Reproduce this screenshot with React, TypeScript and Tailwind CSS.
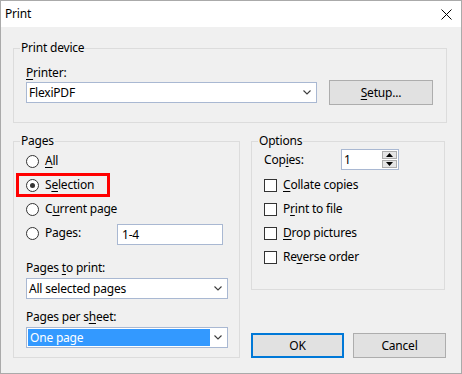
import React from "react";

const U = ({ children }: { children: React.ReactNode }) => (
  <span className="underline decoration-1 underline-offset-[2px]">{children}</span>
);

const Chevron = () => (
  <svg width="8" height="5" viewBox="0 0 8 5" className="block">
    <path d="M0.5 0.5 L4 4 L7.5 0.5" fill="none" stroke="#3c3c3c" strokeWidth="1.1" />
  </svg>
);

const Combo = ({
  width,
  text,
  highlighted,
}: {
  width: string;
  text: string;
  highlighted?: boolean;
}) => (
  <div className={`${width} h-[21px] border border-[#a9b8d2] bg-white flex items-stretch shrink-0`}>
    {highlighted ? (
      <div className="flex-1 my-[1px] ml-[1px] mr-[17px] bg-[#3399ff] text-white pl-[2px] flex items-center leading-none">
        {text}
      </div>
    ) : (
      <div className="flex-1 pl-[2px] flex items-center leading-none">{text}</div>
    )}
    {highlighted ? null : <div className="w-[17px]" />}
    <div className="w-0 flex items-center">
      <div className="-ml-[13px]">
        <Chevron />
      </div>
    </div>
  </div>
);

const Radio = ({ checked }: { checked?: boolean }) => (
  <div className="w-[13px] h-[13px] rounded-full border border-[#333333] bg-white flex items-center justify-center shrink-0">
    {checked ? <div className="w-[5px] h-[5px] rounded-full bg-[#333333]" /> : null}
  </div>
);

const Check = () => <div className="w-[13px] h-[13px] border border-[#333333] bg-white shrink-0" />;

const Button = ({
  children,
  width,
  primary,
}: {
  children: React.ReactNode;
  width: string;
  primary?: boolean;
}) => (
  <div
    className={`${width} h-[25px] bg-[#e1e1e1] flex items-center justify-center shrink-0 ${
      primary ? "border-2 border-[#0078d7]" : "border border-[#adadad]"
    }`}
  >
    {children}
  </div>
);

export default function App() {
  return (
    <div
      className="w-[462px] h-[374px] bg-[#f0f0f0] border border-[#aaaaaa] text-[12px] tracking-[-0.2px] text-black flex flex-col overflow-hidden"
      style={{ fontFamily: '"Noto Sans", "Open Sans", sans-serif' }}
    >
      {/* Title bar */}
      <div className="h-[26px] bg-white flex items-center justify-between pl-[4px] pr-[9px] shrink-0">
        <span className="leading-none">Print</span>
        <svg width="11" height="11" viewBox="0 0 11 11">
          <path d="M0.5 0.5 L10.5 10.5 M10.5 0.5 L0.5 10.5" stroke="#000" strokeWidth="1" />
        </svg>
      </div>

      {/* Print device */}
      <fieldset className="ml-[12px] mt-[13px] w-[434px] border border-[#dcdcdc]">
        <legend className="ml-[6px] px-[1px] leading-[16px]">Print device</legend>
        <div className="pl-[12px] pt-[9px] pb-[17px]">
          <div className="leading-[15px]">
            <U>P</U>rinter:
          </div>
          <div className="flex items-center gap-[12px] h-[25px]">
            <Combo width="w-[291px]" text="FlexiPDF" />
            <Button width="w-[104px]">
              <span>
                <U>S</U>etup...
              </span>
            </Button>
          </div>
        </div>
      </fieldset>

      <div className="flex ml-[12px] mt-[10px] gap-[11px]">
        {/* Pages */}
        <fieldset className="w-[227px] border border-[#dcdcdc]">
          <legend className="ml-[6px] px-[1px] leading-[16px]">Pages</legend>
          <div className="pl-[12px] pr-[11px] pb-[9px]">
            <div className="h-[24px] flex items-center gap-[6px]">
              <Radio />
              <span>
                <U>A</U>ll
              </span>
            </div>
            <div className="h-[24px] w-[94px] -ml-[10px] pl-[7px] border-[3px] border-[#ff0000] flex items-center gap-[6px]">
              <Radio checked />
              <span>
                S<U>e</U>lection
              </span>
            </div>
            <div className="h-[24px] flex items-center gap-[6px]">
              <Radio />
              <span>
                C<U>u</U>rrent page
              </span>
            </div>
            <div className="h-[24px] flex items-center">
              <Radio />
              <span className="ml-[6px] w-[72px]">Pages:</span>
              <div className="w-[106px] h-[21px] border border-[#a9b8d2] bg-white flex items-center pl-[4px] mt-[3px]">
                1-4
              </div>
            </div>
            <div className="mt-[15px] leading-[16px]">
              Pages <U>t</U>o print:
            </div>
            <div className="mt-[2px]">
              <Combo width="w-[202px]" text="All selected pages" />
            </div>
            <div className="mt-[10px] leading-[16px]">
              Pages per s<U>h</U>eet:
            </div>
            <div className="mt-[2px]">
              <Combo width="w-[202px]" text="One page" highlighted />
            </div>
          </div>
        </fieldset>

        {/* Right column */}
        <div className="flex flex-col">
          <fieldset className="w-[194px] border border-[#dcdcdc]">
            <legend className="ml-[6px] px-[1px] leading-[16px]">Options</legend>
            <div className="pl-[12px] pb-[20px]">
              <div className="h-[21px] flex items-center">
                <span className="w-[77px]">
                  Cop<U>i</U>es:
                </span>
                <div className="w-[58px] h-[21px] border border-[#a9b8d2] bg-white flex items-center">
                  <span className="pl-[2px] flex-1">1</span>
                  <div className="flex flex-col gap-[1px] mr-[1px]">
                    <div className="w-[15px] h-[8px] bg-[#e5e5e5] border border-[#acacac] flex items-center justify-center">
                      <svg width="7" height="4" viewBox="0 0 7 4">
                        <path d="M3.5 0 L7 4 L0 4 Z" fill="#000" />
                      </svg>
                    </div>
                    <div className="w-[15px] h-[8px] bg-[#e5e5e5] border border-[#acacac] flex items-center justify-center">
                      <svg width="7" height="4" viewBox="0 0 7 4">
                        <path d="M0 0 L7 0 L3.5 4 Z" fill="#000" />
                      </svg>
                    </div>
                  </div>
                </div>
              </div>
              <div className="mt-[3px] h-[24px] flex items-center gap-[6px]">
                <Check />
                <span>
                  <U>C</U>ollate copies
                </span>
              </div>
              <div className="h-[24px] flex items-center gap-[6px]">
                <Check />
                <span>
                  P<U>r</U>int to file
                </span>
              </div>
              <div className="h-[24px] flex items-center gap-[6px]">
                <Check />
                <span>
                  <U>D</U>rop pictures
                </span>
              </div>
              <div className="h-[24px] flex items-center gap-[6px]">
                <Check />
                <span>
                  Re<U>v</U>erse order
                </span>
              </div>
            </div>
          </fieldset>
          <div className="mt-[43px] flex gap-[9px]">
            <Button width="w-[93px]" primary>
              OK
            </Button>
            <Button width="w-[93px]">Cancel</Button>
          </div>
        </div>
      </div>
    </div>
  );
}
